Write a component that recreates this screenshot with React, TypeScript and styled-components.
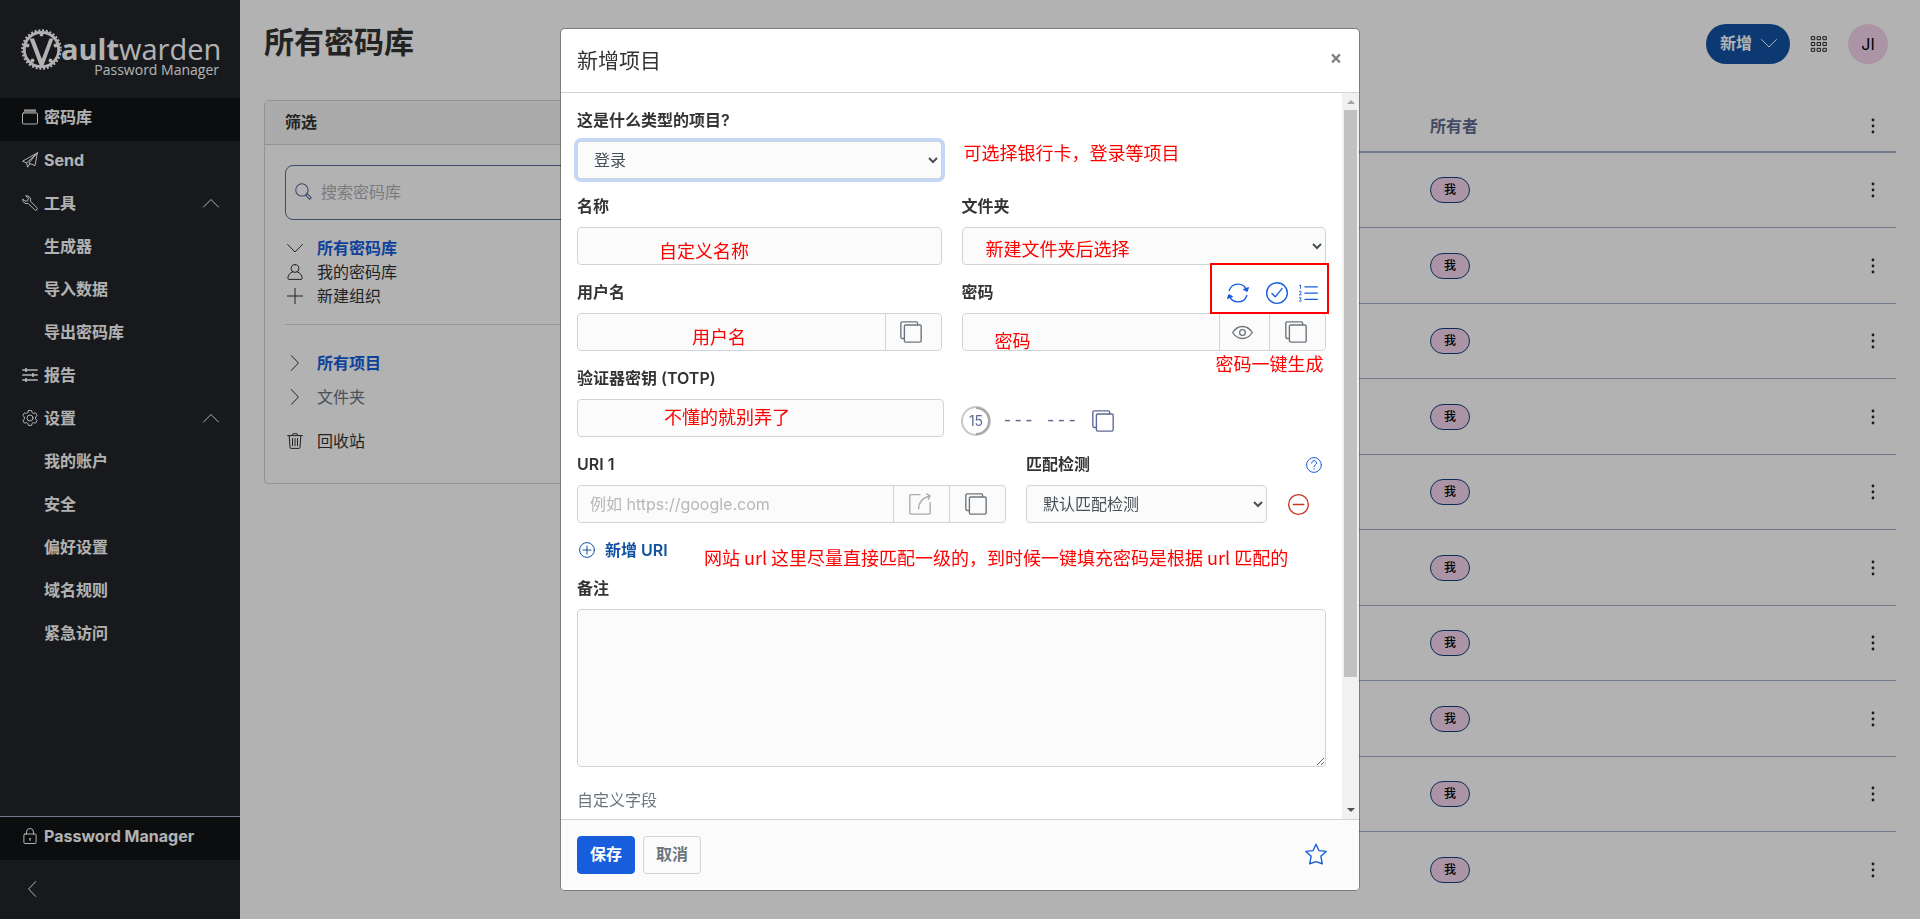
import React from "react";
import styled, { createGlobalStyle, css } from "styled-components";

const GlobalStyle = createGlobalStyle`
  *, *::before, *::after { box-sizing: border-box; }
  body {
    margin: 0;
    background: #ffffff;
    color: #333333;
    font-family: Inter, "Noto Sans CJK SC", sans-serif;
    font-size: 16px;
    line-height: 24px;
  }
  a { color: inherit; text-decoration: none; }
  button, input, select, textarea { font: inherit; }
`;

/* ---------- icons ---------- */

const Svg = styled.svg<{ $size: number }>`
  display: block;
  flex: none;
  width: ${(p) => p.$size}px;
  height: ${(p) => p.$size}px;
  fill: none;
  stroke: currentColor;
  stroke-width: 1;
  stroke-linecap: round;
  stroke-linejoin: round;
`;

const icons = {
  vault: (
    <>
      <path d="M2.400 1h11.200l1 2.600H1.400Z" fill="currentColor" stroke="none" opacity=".65" />
      <path d="M2.400 1h11.200" />
      <rect x=".5" y="4" width="15" height="11" rx="1" />
    </>
  ),
  send: <path d="M15.400.8.600 9.200l4 1.800L15.400.800 13 13.600l-5-2L5.600 15.200 4.600 11M8 11.600l-1.200-.6L15.400.800" />,
  wrench: (
    <path d="M4 .8a4 4 0 0 1 4.400 5.400l6.400 6.400a1.500 1.500 0 0 1-2.200 2.200L6.200 8.400A4 4 0 0 1 .8 4l2.500 2.300 2.400-.6.600-2.400Z" />
  ),
  up: <path d="m.6 12 7.400-7.500 7.400 7.500" />,
  down: <path d="M.6 4.500 8 12l7.400-7.500" />,
  right: <path d="m4.400.6 7 7.400-7 7.400" />,
  left: <path d="m11.600.6-7 7.400 7 7.400" />,
  sliders: (
    <>
      <path d="M.7 3h14.600M.7 8h14.600M.7 13h14.600" strokeWidth="1.300" />
      <path d="M4 2v2M11 7v2M4 12v2" strokeWidth="2.200" />
    </>
  ),
  gear: (
    <>
      <circle cx="8" cy="8" r="3" />
      <path d="M6.400.6h3.200l.5 2 1.400.8 2-.6 1.600 2.700-1.500 1.500v2l1.500 1.500-1.600 2.700-2-.6-1.400.8-.5 2H6.400l-.5-2-1.400-.8-2 .6-1.600-2.700L2.400 9V7L.9 5.500l1.600-2.700 2 .6 1.400-.8Z" />
    </>
  ),
  lock: (
    <>
      <rect x="1.900" y="6" width="12.200" height="9.500" rx="1" />
      <path d="M4.500 6V4a3.500 3.500 0 0 1 7 0v2M8 10.500v2M7.400 10.800h1.200" />
    </>
  ),
  search: (
    <>
      <circle cx="6.500" cy="6.500" r="5.800" />
      <path d="m10.800 10.800 1.200-.3 3.300 3.300-1.500 1.500-3.300-3.300Z" />
    </>
  ),
  user: (
    <path d="M8 .6a3.900 3.900 0 0 1 0 7.800A3.900 3.900 0 0 1 8 .6ZM5.800 7.800C2.800 9 .9 11 .9 14.400q0 1 1 1h12.200q1 0 1-1c0-3.400-1.900-5.400-4.900-6.600" />
  ),
  plus: <path d="M8 .4v15.200M.4 8h15.200" />,
  trash: <path d="M.6 2.600h14.800M5 2.400 6 .7h4l1 1.700M2.200 2.800l.8 11.600q.1 1 1 1h8q.9 0 1-1l.8-11.600M5.500 5.600v7M8 5.600v7M10.500 5.600v7" />,
  copy: (
    <>
      <rect x="3.200" y="2.900" width="12.200" height="12.500" rx="1" />
      <path d="M3 12.700H1.600q-1 0-1-1V1.600q0-1 1-1h10.200q1 0 1 1v1" />
    </>
  ),
  eye: (
    <>
      <path d="M.5 8C4.500 1.900 11.500 1.900 15.500 8 11.500 14.100 4.500 14.100.5 8Z" />
      <circle cx="8" cy="8" r="2.200" />
    </>
  ),
  refresh: (
    <>
      <path d="M1.600 6.200A6.700 6.700 0 0 1 14.300 6M14.400 9.800A6.700 6.700 0 0 1 1.700 10" />
      <path d="m12.200 5.400 2.400 1.200.9-2.400ZM3.800 10.600 1.400 9.400l-.9 2.400Z" fill="currentColor" />
    </>
  ),
  check: (
    <>
      <circle cx="8" cy="8" r="7.500" />
      <path d="m4.300 8.400 2.400 2.400 5-6" />
    </>
  ),
  list: (
    <>
      <path d="M5.500 3h10M5.500 8h10M5.500 13h10" />
      <path d="M1.200 2 2 1.600v2.800M1 6.800q1-.8 1.500 0T1 9.500h1.600M1 11.800h1.500L1.700 13q1.200.4.800 1.300-.6.700-1.500.2" strokeWidth=".7" />
    </>
  ),
  launch: (
    <path d="M8 1.200H1.500q-.9 0-.9.900v12.400q0 .9.900.9h13q.9 0 .9-.9V7M7 11.500C7 7 10 3.500 15 2.200M12.800.7 15.300 2l-1.200 2.600" />
  ),
  help: (
    <>
      <circle cx="8" cy="8" r="7.400" />
      <path d="M5.600 6c0-3.200 4.900-3.200 4.900 0 0 1.800-2.400 1.800-2.400 3.800M8.100 11.700v.4" />
    </>
  ),
  minus: (
    <>
      <circle cx="8" cy="8" r="7.500" />
      <path d="M4 8h8" />
    </>
  ),
  plusCircle: (
    <>
      <circle cx="8" cy="8" r="7.400" />
      <path d="M4 8h8M8 4v8" />
    </>
  ),
  star: <path d="m8 .9 2.100 4.600 5.300.6-3.900 3.500 1.100 5.500L8 13.600l-4.600 1.500 1.100-5.500L.6 6.100l5.300-.6Z" />,
  grid: (
    <path d="M.7.7h3v3h-3ZM6.500.7h3v3h-3ZM12.300.7h3v3h-3ZM.7 6.500h3v3h-3ZM6.500 6.500h3v3h-3ZM12.300 6.500h3v3h-3ZM.7 12.300h3v3h-3ZM6.500 12.300h3v3h-3ZM12.300 12.300h3v3h-3Z" />
  ),
  dots: (
    <g fill="currentColor" stroke="none">
      <circle cx="8" cy="2" r="1.400" />
      <circle cx="8" cy="8" r="1.400" />
      <circle cx="8" cy="14" r="1.400" />
    </g>
  ),
};

type IconName = keyof typeof icons;

const Icon = ({ name, size = 16 }: { name: IconName; size?: number }) => (
  <Svg viewBox="0 0 16 16" $size={size} overflow="visible" aria-hidden="true">
    {icons[name]}
  </Svg>
);

/* ---------- page shell ---------- */

const Page = styled.div`
  display: flex;
  height: 100vh;
  overflow: hidden;
`;

const Sidebar = styled.nav`
  display: flex;
  flex-direction: column;
  flex: none;
  width: 240px;
  background: #212529;
  color: #ffffff;
  font-weight: 700;
`;

const LogoLink = styled.a`
  display: block;
  height: 98px;
  padding: 26px 20px 0;
`;

const LogoSvg = styled.svg`
  display: block;
  width: 200px;
  height: 56px;
  font-family: "Open Sans", sans-serif;
`;

const NavLink = styled.a<{ $active?: boolean; $child?: boolean }>`
  display: flex;
  align-items: center;
  gap: 6px;
  height: 43px;
  padding: 0 21px 6px ${(p) => (p.$child ? 44 : 22)}px;
  background: ${(p) => (p.$active ? "#121416" : "transparent")};
`;

const NavText = styled.span`
  flex: 1;
`;

const NavBottom = styled.div`
  margin-top: auto;
  border-top: 1px solid #a3afd0;
`;

const CollapseButton = styled.button`
  display: flex;
  width: 100%;
  height: 59px;
  padding: 21px 24px;
  border: 0;
  background: none;
  color: #ffffff;
`;

const Main = styled.main`
  flex: 1;
  min-width: 0;
  padding: 24px;
`;

const TopBar = styled.header`
  display: flex;
  align-items: flex-start;
  height: 76px;
`;

const PageTitle = styled.h1`
  flex: 1;
  margin: 0;
  font-size: 30px;
  line-height: 36px;
  font-weight: 700;
`;

const TopActions = styled.div`
  display: flex;
  align-items: center;
  gap: 21px;
  padding-right: 8px;
  color: #212529;
`;

const NewButton = styled.button`
  display: flex;
  align-items: center;
  gap: 9px;
  height: 40px;
  padding: 0 13px 2px 14px;
  border: 0;
  border-radius: 20px;
  background: #1252a3;
  color: #ffffff;
  font-weight: 700;
`;

const IconButton = styled.button<{ $color?: string }>`
  display: flex;
  align-items: center;
  justify-content: center;
  padding: 0;
  border: 0;
  background: none;
  color: ${(p) => p.$color ?? "inherit"};
`;

const Avatar = styled.button`
  width: 40px;
  height: 40px;
  padding: 0;
  border: 0;
  border-radius: 50%;
  background: #f4d5ec;
  color: #000000;
`;

const Columns = styled.div`
  display: grid;
  grid-template-columns: 1fr 3fr;
  gap: 24px;
  align-items: start;
`;

/* ---------- filter card ---------- */

const Card = styled.section`
  border: 1px solid #ced4da;
  border-radius: 4px;
`;

const CardHeader = styled.h2`
  margin: 0;
  padding: 9px 20px 10px;
  border-bottom: 1px solid #ced4da;
  background: #f5f5f5;
  font-size: 16px;
  line-height: 24px;
  font-weight: 700;
`;

const CardBody = styled.div`
  padding: 20px 20px 30px;
`;

const SearchBox = styled.label`
  display: flex;
  align-items: center;
  gap: 9px;
  height: 55px;
  margin-bottom: 16px;
  padding: 0 9px 2px;
  border: 1px solid #5a6a9a;
  border-radius: 8px;
  color: #5a6a9a;
`;

const SearchInput = styled.input`
  flex: 1;
  min-width: 0;
  border: 0;
  padding: 0;
  outline: 0;
  background: transparent;
  &::placeholder { color: #b0b0b5; }
`;

const FilterList = styled.ul<{ $gap: number }>`
  display: flex;
  flex-direction: column;
  gap: ${(p) => p.$gap}px;
  margin: 0;
  padding: 0;
  list-style: none;
`;

const FilterLink = styled.a<{ $active?: boolean; $muted?: boolean }>`
  display: flex;
  align-items: center;
  gap: 14px;
  padding-left: 2px;
  font-weight: ${(p) => (p.$active ? 700 : 400)};
  span { color: ${(p) => (p.$active ? "#175ddc" : p.$muted ? "#6c757d" : "#333333")}; }
`;

const Divider = styled.hr`
  height: 1px;
  margin: 16px 0 26px;
  border: 0;
  background: #dcdcdc;
`;

const TrashRow = styled.div`
  margin-top: 20px;
`;

/* ---------- vault table ---------- */

const Table = styled.table`
  width: 100%;
  border-spacing: 0;
  table-layout: fixed;
  th { height: 53px; border-bottom: 2px solid #a3afd0; }
  td { height: 75px; border-bottom: 1px solid #a3afd0; }
  tr:nth-child(even) td { height: 76px; }
  tr:last-child td { border-bottom: 0; }
  th, td { padding: 0; text-align: left; }
`;

const OwnerHead = styled.th`
  color: #5e6b92;
  font-weight: 600;
`;

const NameCol = styled.col``;
const OwnerCol = styled.col`width: 420px;`;
const MenuCol = styled.col`width: 46px;`;

const Badge = styled.span`
  display: flex;
  align-items: center;
  justify-content: center;
  width: 40px;
  height: 26px;
  border: 1px solid #12407f;
  border-radius: 13px;
  background: #f4d5ec;
  color: #000000;
  font-size: 12px;
  line-height: 16px;
  font-weight: 500;
`;

const Menu = styled(IconButton)`
  width: 46px;
  color: #212529;
`;

/* ---------- modal ---------- */

const Backdrop = styled.div`
  position: fixed;
  inset: 0;
  display: flex;
  justify-content: center;
  padding: 28px;
  background: rgba(0, 0, 0, 0.3);
`;

const Dialog = styled.form`
  display: flex;
  flex-direction: column;
  width: 800px;
  max-width: 100%;
  border: 1px solid rgba(0, 0, 0, 0.3);
  border-radius: 5px;
  background: #ffffff;
  background-clip: padding-box;
  overflow: hidden;
`;

const DialogHeader = styled.header`
  display: flex;
  justify-content: space-between;
  padding: 16px 16px 15px;
  border-bottom: 1px solid #ced4dc;
`;

const DialogTitle = styled.h2`
  margin: 0;
  font-size: 21px;
  line-height: 32px;
  font-weight: 400;
`;

const CloseButton = styled.button`
  width: 14px;
  height: 26px;
  padding: 0;
  border: 0;
  background: none;
  color: #808080;
  font-family: "Open Sans", sans-serif;
  font-size: 21px;
  line-height: 26px;
  font-weight: 700;
`;

const DialogMain = styled.div`
  display: flex;
  flex: 1;
  min-height: 0;
`;

const DialogBody = styled.div`
  flex: 1;
  min-width: 0;
  padding: 16px;
  overflow: auto;
  scrollbar-width: none;
`;

const ScrollBar = styled.div`
  display: flex;
  flex-direction: column;
  align-items: center;
  width: 17px;
  background: #f1f1f1;
`;

const ScrollArrow = styled.svg`
  flex: none;
  width: 17px;
  height: 17px;
`;

const ScrollTrack = styled.div`
  flex: 1;
  width: 13px;
`;

const ScrollThumb = styled.div`
  height: 82%;
  background: #c1c1c1;
`;

const Row = styled.div<{ $columns?: string; $gap?: number }>`
  display: grid;
  grid-template-columns: ${(p) => p.$columns ?? "1fr 1fr"};
  gap: ${(p) => p.$gap ?? 20}px;
  margin-bottom: 16px;
`;

const Field = styled.div`
  position: relative;
  min-width: 0;
`;

const LabelRow = styled.div`
  display: flex;
  align-items: center;
  justify-content: space-between;
  height: 24px;
  margin-bottom: 8px;
`;

const Label = styled.label`
  padding-bottom: 2px;
  font-weight: 600;
`;

const LabelActions = styled.div`
  display: flex;
  align-items: center;
  gap: 17px;
  padding-right: 8px;
  color: #175ddc;
`;

const PairedActions = styled.div`
  display: flex;
  align-items: center;
  gap: 10px;
`;

const HelpLink = styled.a`
  padding-right: 4px;
  color: #175ddc;
`;

const control = css`
  display: block;
  width: 100%;
  min-width: 0;
  height: 38px;
  padding: 6px 12px;
  border: 1px solid #ced4dc;
  border-radius: 4px;
  outline: 0;
  background-color: #fbfbfb;
  color: #465057;
`;

const Input = styled.input`
  ${control}
  &::placeholder { color: #b6b8b8; }
`;

const Select = styled.select<{ $focused?: boolean }>`
  ${control}
  box-shadow: ${(p) => (p.$focused ? "0 0 0 3px #c5d6f6" : "none")};
`;

const TextArea = styled.textarea`
  ${control}
  height: 158px;
  resize: both;
`;

const InputGroup = styled.div`
  display: flex;
  ${Input} {
    flex: 1;
    border-radius: 4px 0 0 4px;
  }
`;

const AddonButton = styled.button<{ $narrow?: boolean }>`
  display: flex;
  align-items: center;
  justify-content: center;
  flex: none;
  width: ${(p) => (p.$narrow ? 51 : 57)}px;
  height: 38px;
  margin-left: -1px;
  padding: 0 4px 0 0;
  border: 1px solid #ced4dc;
  background: #fbfbfb;
  color: #6c757d;
  &:last-child { border-radius: 0 4px 4px 0; }
  &:disabled { color: #a7acb1; }
`;

const TotpCode = styled.div`
  display: flex;
  align-items: center;
  gap: 11px;
  padding: 37px 0 0 2px;
  color: #5e6b92;
`;

const Countdown = styled.svg`
  flex: none;
  width: 30px;
  height: 30px;
  font-family: Inter, sans-serif;
  font-size: 14px;
`;

const CodeText = styled.span`
  margin-right: 3px;
  font-family: "Liberation Mono", monospace;
  font-size: 18px;
  white-space: pre;
`;

const MatchRow = styled.div`
  display: flex;
`;

const RemoveButton = styled(IconButton)`
  flex: none;
  width: 59px;
  padding-left: 4px;
  color: #c83522;
`;

const AddLine = styled.div`
  position: relative;
  margin-bottom: 14px;
`;

const AddLink = styled.a`
  display: inline-flex;
  align-items: center;
  gap: 10px;
  padding: 0 0 2px 2px;
  color: #1252a3;
  font-weight: 600;
  line-height: 22px;
  vertical-align: top;
`;

const SectionTitle = styled.h3`
  margin: 21px 0 0;
  color: #6c757d;
  font-size: 16px;
  line-height: 24px;
  font-weight: 400;
`;

const DialogFooter = styled.footer`
  display: flex;
  gap: 8px;
  padding: 16px;
  border-top: 1px solid #ced4dc;
  background: #fbfbfb;
`;

const Button = styled.button<{ $primary?: boolean }>`
  height: 38px;
  padding: 0 12px 2px;
  border: 1px solid ${(p) => (p.$primary ? "#175ddc" : "#ced4dc")};
  border-radius: 4px;
  background: ${(p) => (p.$primary ? "#175ddc" : "#fbfbfb")};
  color: ${(p) => (p.$primary ? "#ffffff" : "#6c757d")};
  font-weight: 600;
`;

const StarButton = styled(IconButton)`
  margin: 0 16px 0 auto;
  padding-bottom: 2px;
  color: #175ddc;
`;

/* ---------- red hints over the form ---------- */

const Hint = styled.span<{ $left: number; $top: number }>`
  position: absolute;
  z-index: 1;
  left: ${(p) => p.$left}px;
  top: ${(p) => p.$top}px;
  color: #ff0000;
  font-family: "Noto Sans CJK SC", sans-serif;
  font-size: 18px;
  line-height: 22px;
  white-space: nowrap;
  pointer-events: none;
`;

const HintFrame = styled.div`
  position: absolute;
  z-index: 1;
  top: -18px;
  right: -3px;
  width: 119px;
  height: 51px;
  border: 2px solid #ff0000;
  pointer-events: none;
`;

/* ---------- data ---------- */

type NavItem = { text: string; icon?: IconName; active?: boolean; open?: boolean };

const navItems: NavItem[] = [
  { text: "密码库", icon: "vault", active: true },
  { text: "Send", icon: "send" },
  { text: "工具", icon: "wrench", open: true },
  { text: "生成器" },
  { text: "导入数据" },
  { text: "导出密码库" },
  { text: "报告", icon: "sliders" },
  { text: "设置", icon: "gear", open: true },
  { text: "我的账户" },
  { text: "安全" },
  { text: "偏好设置" },
  { text: "域名规则" },
  { text: "紧急访问" },
];

const rows = Array.from({ length: 10 }, (_, i) => i);

const Logo = () => (
  <LogoSvg viewBox="0 0 200 56" fill="#ffffff" role="img" aria-label="Vaultwarden">
    <g fill="none" stroke="#ffffff">
      <circle cx="21.500" cy="23.500" r="17.200" strokeWidth="2.800" />
      <circle cx="21.500" cy="23.500" r="19.200" strokeWidth="2.200" strokeDasharray="2 1.770" />
    </g>
    <path d="M9.500 12.500h4.500l7.800 20.500 7.700-20.500h4L23.300 40h-3.400Z" />
    <circle cx="21.500" cy="8.500" r="1.900" />
    <circle cx="7.500" cy="19.500" r="1.900" />
    <circle cx="35.500" cy="19.500" r="1.900" />
    <circle cx="12.500" cy="34.500" r="1.900" />
    <circle cx="30.500" cy="34.500" r="1.900" />
    <text x="41" y="34" fontSize="29">
      <tspan fontWeight="700">ault</tspan>
      <tspan fontWeight="400">warden</tspan>
    </text>
    <text x="199" y="49" fontSize="14" fontWeight="400" textAnchor="end">
      Password Manager
    </text>
  </LogoSvg>
);

export default function App() {
  return (
    <>
      <GlobalStyle />
      <Page>
        <Sidebar>
          <LogoLink href="#">
            <Logo />
          </LogoLink>
          {navItems.map((item) => (
            <NavLink key={item.text} href="#" $active={item.active} $child={!item.icon}>
              {item.icon && <Icon name={item.icon} />}
              <NavText>{item.text}</NavText>
              {item.open && <Icon name="up" />}
            </NavLink>
          ))}
          <NavBottom>
            <NavLink href="#" $active>
              <Icon name="lock" />
              <NavText>Password Manager</NavText>
            </NavLink>
            <CollapseButton type="button" aria-label="收起">
              <Icon name="left" />
            </CollapseButton>
          </NavBottom>
        </Sidebar>

        <Main>
          <TopBar>
            <PageTitle>所有密码库</PageTitle>
            <TopActions>
              <NewButton type="button">
                新增
                <Icon name="down" />
              </NewButton>
              <IconButton type="button" aria-label="应用">
                <Icon name="grid" />
              </IconButton>
              <Avatar type="button">JI</Avatar>
            </TopActions>
          </TopBar>

          <Columns>
            <Card>
              <CardHeader>筛选</CardHeader>
              <CardBody>
                <SearchBox>
                  <Icon name="search" size={17} />
                  <SearchInput type="search" placeholder="搜索密码库" aria-label="搜索密码库" />
                </SearchBox>
                <FilterList $gap={0}>
                  <li>
                    <FilterLink href="#" $active>
                      <Icon name="down" />
                      <span>所有密码库</span>
                    </FilterLink>
                  </li>
                  <li>
                    <FilterLink href="#">
                      <Icon name="user" />
                      <span>我的密码库</span>
                    </FilterLink>
                  </li>
                  <li>
                    <FilterLink href="#">
                      <Icon name="plus" />
                      <span>新建组织</span>
                    </FilterLink>
                  </li>
                </FilterList>
                <Divider />
                <FilterList $gap={10}>
                  <li>
                    <FilterLink href="#" $active>
                      <Icon name="right" />
                      <span>所有项目</span>
                    </FilterLink>
                  </li>
                  <li>
                    <FilterLink href="#" $muted>
                      <Icon name="right" />
                      <span>文件夹</span>
                    </FilterLink>
                  </li>
                </FilterList>
                <TrashRow>
                  <FilterLink href="#">
                    <Icon name="trash" />
                    <span>回收站</span>
                  </FilterLink>
                </TrashRow>
              </CardBody>
            </Card>

            <Table>
              <colgroup>
                <NameCol />
                <OwnerCol />
                <MenuCol />
              </colgroup>
              <thead>
                <tr>
                  <th />
                  <OwnerHead>所有者</OwnerHead>
                  <th>
                    <Menu type="button" aria-label="选项">
                      <Icon name="dots" />
                    </Menu>
                  </th>
                </tr>
              </thead>
              <tbody>
                {rows.map((row) => (
                  <tr key={row}>
                    <td />
                    <td>
                      <Badge>我</Badge>
                    </td>
                    <td>
                      <Menu type="button" aria-label="选项">
                        <Icon name="dots" />
                      </Menu>
                    </td>
                  </tr>
                ))}
              </tbody>
            </Table>
          </Columns>
        </Main>
      </Page>

      <Backdrop>
        <Dialog role="dialog" aria-labelledby="dialog-title">
          <DialogHeader>
            <DialogTitle id="dialog-title">新增项目</DialogTitle>
            <CloseButton type="button" aria-label="关闭">
              ×
            </CloseButton>
          </DialogHeader>

          <DialogMain>
            <DialogBody>
              <Row>
                <Field>
                  <LabelRow>
                    <Label htmlFor="type">这是什么类型的项目?</Label>
                  </LabelRow>
                  <Select id="type" $focused>
                    <option>登录</option>
                  </Select>
                </Field>
                <Field>
                  <Hint $left={2} $top={32}>可选择银行卡，登录等项目</Hint>
                </Field>
              </Row>

              <Row>
                <Field>
                  <LabelRow>
                    <Label htmlFor="name">名称</Label>
                  </LabelRow>
                  <Input id="name" />
                  <Hint $left={82} $top={44}>自定义名称</Hint>
                </Field>
                <Field>
                  <LabelRow>
                    <Label htmlFor="folder">文件夹</Label>
                  </LabelRow>
                  <Select id="folder">
                    <option />
                  </Select>
                  <Hint $left={24} $top={42}>新建文件夹后选择</Hint>
                </Field>
              </Row>

              <Row>
                <Field>
                  <LabelRow>
                    <Label htmlFor="username">用户名</Label>
                  </LabelRow>
                  <InputGroup>
                    <Input id="username" />
                    <AddonButton type="button" aria-label="复制用户名">
                      <Icon name="copy" size={22} />
                    </AddonButton>
                  </InputGroup>
                  <Hint $left={115} $top={44}>用户名</Hint>
                </Field>
                <Field>
                  <LabelRow>
                    <Label htmlFor="password">密码</Label>
                    <LabelActions>
                      <IconButton type="button" aria-label="生成密码">
                        <Icon name="refresh" size={22} />
                      </IconButton>
                      <PairedActions>
                        <IconButton type="button" aria-label="检查密码">
                          <Icon name="check" size={22} />
                        </IconButton>
                        <IconButton type="button" aria-label="字符计数">
                          <Icon name="list" size={20} />
                        </IconButton>
                      </PairedActions>
                    </LabelActions>
                  </LabelRow>
                  <InputGroup>
                    <Input id="password" type="password" />
                    <AddonButton type="button" $narrow aria-label="显示密码">
                      <Icon name="eye" size={21} />
                    </AddonButton>
                    <AddonButton type="button" aria-label="复制密码">
                      <Icon name="copy" size={22} />
                    </AddonButton>
                  </InputGroup>
                  <HintFrame />
                  <Hint $left={33} $top={48}>密码</Hint>
                  <Hint $left={254} $top={71}>密码一键生成</Hint>
                </Field>
              </Row>

              <Row $gap={15}>
                <Field>
                  <LabelRow>
                    <Label htmlFor="totp">验证器密钥 (TOTP)</Label>
                  </LabelRow>
                  <Input id="totp" />
                  <Hint $left={87} $top={38}>不懂的就别弄了</Hint>
                </Field>
                <TotpCode>
                  <Countdown viewBox="0 0 30 30">
                    <circle cx="15" cy="15" r="14" fill="none" stroke="#c8c8c8" strokeWidth="2" />
                    <path d="M15 2a13 13 0 0 1 0 26" fill="none" stroke="#a6a6a6" strokeWidth="2" />
                    <text x="15" y="20" textAnchor="middle" fill="#5e6b92">
                      15
                    </text>
                  </Countdown>
                  <CodeText>--- ---</CodeText>
                  <IconButton type="button" aria-label="复制验证码">
                    <Icon name="copy" size={22} />
                  </IconButton>
                </TotpCode>
              </Row>

              <Row $columns="143fr 100fr">
                <Field>
                  <LabelRow>
                    <Label htmlFor="uri">URI 1</Label>
                  </LabelRow>
                  <InputGroup>
                    <Input id="uri" placeholder="例如 https://google.com" />
                    <AddonButton type="button" disabled aria-label="前往">
                      <Icon name="launch" size={22} />
                    </AddonButton>
                    <AddonButton type="button" aria-label="复制 URI">
                      <Icon name="copy" size={22} />
                    </AddonButton>
                  </InputGroup>
                </Field>
                <Field>
                  <LabelRow>
                    <Label htmlFor="match">匹配检测</Label>
                    <HelpLink href="#" aria-label="帮助">
                      <Icon name="help" />
                    </HelpLink>
                  </LabelRow>
                  <MatchRow>
                    <Select id="match">
                      <option>默认匹配检测</option>
                    </Select>
                    <RemoveButton type="button" aria-label="移除">
                      <Icon name="minus" size={21} />
                    </RemoveButton>
                  </MatchRow>
                </Field>
              </Row>

              <AddLine>
                <AddLink href="#">
                  <Icon name="plusCircle" />
                  新增 URI
                </AddLink>
                <Hint $left={127} $top={7}>
                  网站 url 这里尽量直接匹配一级的，到时候一键填充密码是根据 url 匹配的
                </Hint>
              </AddLine>

              <Field>
                <LabelRow>
                  <Label htmlFor="notes">备注</Label>
                </LabelRow>
                <TextArea id="notes" />
              </Field>

              <SectionTitle>自定义字段</SectionTitle>
            </DialogBody>

            <ScrollBar aria-hidden="true">
              <ScrollArrow viewBox="0 0 17 17">
                <path d="m5 11 4-4 4 4Z" fill="#a3a3a3" />
              </ScrollArrow>
              <ScrollTrack>
                <ScrollThumb />
              </ScrollTrack>
              <ScrollArrow viewBox="0 0 17 17">
                <path d="m5 6 4 4 4-4Z" fill="#505050" />
              </ScrollArrow>
            </ScrollBar>
          </DialogMain>

          <DialogFooter>
            <Button type="submit" $primary>
              保存
            </Button>
            <Button type="button">取消</Button>
            <StarButton type="button" aria-label="收藏">
              <Icon name="star" size={22} />
            </StarButton>
          </DialogFooter>
        </Dialog>
      </Backdrop>
    </>
  );
}
